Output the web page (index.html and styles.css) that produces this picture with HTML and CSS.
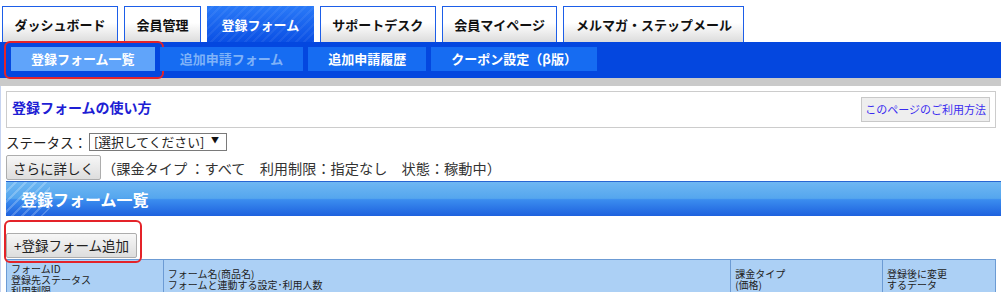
FILE: index.html
```html
<!DOCTYPE html>
<html lang="ja">

<head>
  <meta charset="UTF-8">
  <meta name="viewport" content="width=device-width, initial-scale=1.0">
  <title>登録フォーム一覧</title>
  <link rel="stylesheet" href="styles.css">
</head>

<body>
  <div class="tabs">
    <div class="tab">ダッシュボード</div>
    <div class="tab">会員管理</div>
    <div class="tab active">登録フォーム</div>
    <div class="tab">サポートデスク</div>
    <div class="tab">会員マイページ</div>
    <div class="tab">メルマガ・ステップメール</div>
  </div>
  <div class="subbar">
    <div class="subtab current">登録フォーム一覧</div>
    <div class="subtab dim">追加申請フォーム</div>
    <div class="subtab">追加申請履歴</div>
    <div class="subtab">クーポン設定（β版）</div>
  </div>
  <div class="band"></div>

  <div class="content">
    <div class="howto">
      <span class="howto-title">登録フォームの使い方</span>
      <span class="help-btn">このページのご利用方法</span>
    </div>

    <div class="status-row">
      <label for="status">ステータス：</label>
      <span class="select-wrap">
        <select id="status" class="status-select">
          <option>[選択してください]</option>
        </select>
      </span>
    </div>

    <div class="detail-row">
      <button class="btn">さらに詳しく</button>
      <span class="filter">（課金タイプ ：すべて　利用制限：指定なし　状態：稼動中）</span>
    </div>

    <h2 class="heading">登録フォーム一覧</h2>

    <div class="add-row">
      <button class="btn add-btn">+登録フォーム追加</button>
    </div>

    <table class="list">
      <tr>
        <th class="c1">フォームID<br>登録先ステータス<br>利用制限</th>
        <th class="c2">フォーム名(商品名)<br>フォームと連動する設定･利用人数</th>
        <th class="c3">課金タイプ<br>(価格)</th>
        <th class="c4">登録後に変更<br>するデータ</th>
      </tr>
    </table>
  </div>
</body>

</html>
```

FILE: styles.css
```css
* {
  margin: 0;
  padding: 0;
  box-sizing: border-box;
}

body {
  font-family: "Noto Sans CJK JP", sans-serif;
  color: #222;
  overflow: hidden;
}

/* main tabs */
.tabs {
  display: flex;
  gap: 6px;
  padding: 6px 0 0 2px;
}

.tab {
  height: 36px;
  padding: 0 11.5px;
  display: flex;
  align-items: center;
  font-size: 13px;
  font-weight: bold;
  line-height: 1;
  color: #111;
  border: 1px solid #1d5ee8;
  border-bottom: none;
  background: linear-gradient(#ffffff 45%, #dcdcdc);
}

.tab.active {
  border: none;
  padding: 0 14.5px;
  color: #fff;
  background:
    repeating-linear-gradient(-45deg, rgba(255, 255, 255, 0.06) 0 2px, transparent 2px 6px),
    linear-gradient(#2a7af8, #0a4fe4);
}

/* sub tabs */
.subbar {
  height: 36px;
  background: #0447df;
  display: flex;
  gap: 5px;
  padding: 5px 0 0 11px;
  align-items: flex-start;
}

.subtab {
  position: relative;
  height: 24px;
  line-height: 24px;
  padding: 0 20px;
  font-size: 13px;
  font-weight: bold;
  color: #fff;
  background: #166cf2;
}

.subtab.current {
  background: #60a4fa;
}

.subtab.current::after {
  content: "";
  position: absolute;
  top: -6px;
  left: -7px;
  right: -9px;
  bottom: -8px;
  border: 2px solid #e42329;
  border-radius: 6px;
}

.subtab.dim {
  color: #7fb2f8;
}

.band {
  height: 8px;
  background: #cacaca;
}

/* page body */
.content {
  border-left: 1px solid #c6d3f0;
  padding: 5px 5px 0 5px;
  min-height: 220px;
}

.howto {
  height: 37px;
  border: 1px solid #cccccc;
  display: flex;
  align-items: center;
  justify-content: space-between;
  padding: 0 5px;
}

.howto-title {
  font-size: 14px;
  font-weight: bold;
  color: #1e1ed4;
  line-height: 1;
  margin-top: -6px;
}

.help-btn {
  height: 25px;
  line-height: 23px;
  padding: 0 3px;
  font-size: 11px;
  color: #3a2cf0;
  background: #eeeeee;
  border: 1px solid #c8c8c8;
}

.status-row {
  margin-top: 5px;
  height: 18px;
  display: flex;
  align-items: center;
  gap: 2px;
  font-size: 13.5px;
}

.select-wrap {
  position: relative;
}

.select-wrap::after {
  content: "▼";
  position: absolute;
  right: 8px;
  top: 3px;
  font-size: 8px;
  line-height: 1;
  color: #111;
  pointer-events: none;
}

.status-select {
  appearance: none;
  display: block;
  width: 138px;
  height: 18px;
  padding: 0 4px;
  font-family: inherit;
  font-size: 12.8px;
  line-height: 16px;
  color: #222;
  background: #fff;
  border: 1px solid #7a7a7a;
  border-radius: 0;
}

.detail-row {
  margin-top: 4px;
  display: flex;
  align-items: center;
  gap: 1px;
  font-size: 14.2px;
}

.btn {
  height: 25px;
  padding: 0 6px;
  font-family: inherit;
  font-size: 13.5px;
  color: #222;
  background: linear-gradient(#f7f7f7, #dddddd);
  border: 1px solid #adadad;
  border-radius: 2px;
}

.filter {
  color: #333;
}

.heading {
  margin: 1px -5px 0 0;
  height: 35px;
  padding-left: 15px;
  display: flex;
  align-items: center;
  font-size: 16px;
  font-weight: bold;
  color: #fff;
  border-top: 1px solid #2866d2;
  background:
    repeating-linear-gradient(-45deg, transparent 0 5px, rgba(255, 255, 255, 0.22) 5px 7px) left top / 44px 100% no-repeat,
    linear-gradient(#6eb7f3, #55a6ee 48%, #3b8def 52%, #1e61de);
}

.add-row {
  margin-top: 16px;
}

.add-btn {
  position: relative;
  padding: 0 7px;
}

.add-btn::after {
  content: "";
  position: absolute;
  top: -14px;
  left: -3px;
  right: -6px;
  bottom: -6px;
  border: 2px solid #e42329;
  border-radius: 6px;
}

/* list table */
.list {
  margin-top: 1px;
  width: 990px;
  border-collapse: collapse;
}

.list th {
  background: #acd0f5;
  border: 1px solid #6c9bd4;
  padding: 3px 3px 3px 4px;
  font-size: 10px;
  line-height: 11px;
  font-weight: normal;
  text-align: left;
  vertical-align: middle;
  color: #222;
}

.list .c1 { width: 157px; }
.list .c2 { width: 568px; }
.list .c3 { width: 152px; }
.list .c4 { width: 113px; }
```
